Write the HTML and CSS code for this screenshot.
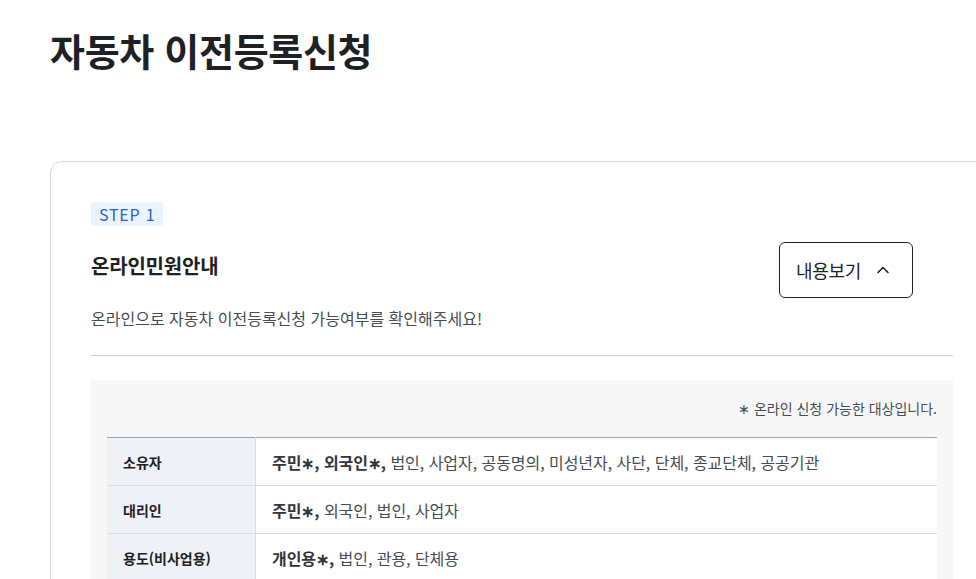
FILE: index.html
```html
<!DOCTYPE html>
<html lang="ko">
<head>
  <meta charset="UTF-8">
  <title>자동차 이전등록신청</title>
  <link rel="stylesheet" href="styles.css">
</head>
<body>
  <div class="page">
    <h1 class="page-title">자동차 이전등록신청</h1>

    <!-- 단계별 안내 카드 -->
    <section class="step-card">
      <div class="step-badge">STEP 1</div>

      <div class="step-head">
        <h2 class="step-title">온라인민원안내</h2>
        <button class="toggle-btn" type="button">
          내용보기
          <svg width="16" height="16" viewBox="0 0 16 16" aria-hidden="true">
            <path d="M3 10.5 L8 5.5 L13 10.5" fill="none" stroke="#1e2124" stroke-width="1.6" stroke-linecap="round" stroke-linejoin="round"/>
          </svg>
        </button>
      </div>

      <p class="step-desc">온라인으로 자동차 이전등록신청 가능여부를 확인해주세요!</p>

      <div class="step-body">
        <p class="note">∗ 온라인 신청 가능한 대상입니다.</p>
        <table class="info-table">
          <tbody>
            <tr>
              <th>소유자</th>
              <td><b>주민∗, 외국인∗,</b> 법인, 사업자, 공동명의, 미성년자, 사단, 단체, 종교단체, 공공기관</td>
            </tr>
            <tr>
              <th>대리인</th>
              <td><b>주민∗,</b> 외국인, 법인, 사업자</td>
            </tr>
            <tr>
              <th>용도(비사업용)</th>
              <td><b>개인용∗,</b> 법인, 관용, 단체용</td>
            </tr>
          </tbody>
        </table>
      </div>
    </section>
  </div>
</body>
</html>
```

FILE: styles.css
```css
/* 기본 */
html, body {
  margin: 0;
  padding: 0;
  overflow: hidden;
}
body {
  font-family: "Noto Sans CJK KR", "Noto Sans", sans-serif;
  color: #1e2124;
  background: #fff;
}

.page {
  padding: 22px 0 0 50px;
  width: 944px;
}

.page-title {
  margin: 0;
  font-size: 38px;
  font-weight: 700;
  letter-spacing: -0.3px;
  line-height: 56px;
  color: #1e2124;
}

/* 카드 */
.step-card {
  margin-top: 83px;
  border: 1px solid #d6dbe3;
  border-radius: 12px;
  padding: 40px 40px 40px;
}

.step-badge {
  width: fit-content;
  padding: 0 8px;
  height: 24px;
  line-height: 24px;
  font-size: 16px;
  letter-spacing: 0.8px;
  color: #2a5fd2;
  background: #ecf2fe;
  border-radius: 4px;
}

.step-head {
  display: flex;
  align-items: center;
  justify-content: space-between;
  margin-top: 16px;
  padding-right: 40px;
}
.step-title {
  margin: 0 0 8px;
  font-size: 20px;
  line-height: 28px;
  font-weight: 700;
  letter-spacing: -0.2px;
}

.toggle-btn {
  display: flex;
  align-items: center;
  gap: 14px;
  height: 56px;
  width: 134px;
  padding: 0 0 0 16px;
  background: #fff;
  border: 1px solid #1e2124;
  border-radius: 6px;
  font-family: inherit;
  font-size: 18px;
  color: #1e2124;
  letter-spacing: -0.3px;
  cursor: pointer;
}

.step-desc {
  margin: 8px 0 0;
  padding-bottom: 25px;
  font-size: 16px;
  line-height: 24px;
  color: #464c53;
  border-bottom: 1px solid #cdd1d5;
}

/* 회색 상자 */
.step-body {
  margin-top: 24px;
  background: #f7f7f8;
  padding: 18px 16px 16px;
}
.note {
  margin: 0 0 19px;
  text-align: right;
  font-size: 14px;
  line-height: 20px;
  color: #464c53;
}

.info-table {
  width: 100%;
  border-collapse: collapse;
  background: #fff;
  border-top: 1px solid #8fa6c6;
}
.info-table th,
.info-table td {
  height: 47px;
  padding: 0 16px;
  border-bottom: 1px solid #d8dce2;
  text-align: left;
}
.info-table th {
  width: 116px;
  background: #eef1f6;
  font-size: 14px;
  font-weight: 700;
  color: #1e2124;
  border-right: 1px solid #d8dce2;
}
.info-table td {
  font-size: 16px;
  color: #464c53;
  letter-spacing: -0.05px;
}
.info-table td b {
  color: #33363d;
}
```
